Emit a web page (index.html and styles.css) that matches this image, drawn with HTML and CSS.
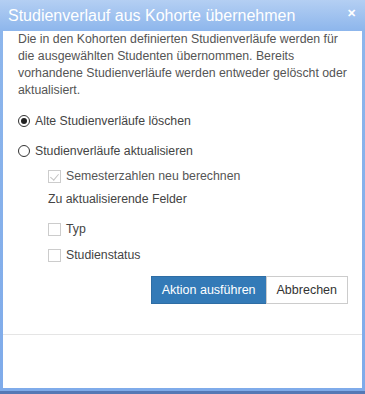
FILE: index.html
```html
<!DOCTYPE html>
<html lang="de">
<head>
    <meta charset="UTF-8">
    <title>Studienverlauf aus Kohorte übernehmen</title>
    <link rel="stylesheet" href="styles.css">
</head>
<body>
    <div class="dialog">
        <div class="titlebar">
            <span class="title">Studienverlauf aus Kohorte übernehmen</span>
            <span class="close">&#x2715;</span>
        </div>

        <div class="content">
            <p class="intro">Die in den Kohorten definierten Studienverläufe werden für die ausgewählten Studenten übernommen. Bereits vorhandene Studienverläufe werden entweder gelöscht oder aktualisiert.</p>

            <div class="options">
                <label class="row row-first">
                    <span class="radio checked"></span>
                    Alte Studienverläufe löschen
                </label>
                <label class="row row-second">
                    <span class="radio"></span>
                    Studienverläufe aktualisieren
                </label>

                <div class="sub">
                    <label class="row row-semester">
                        <span class="check checked disabled"></span>
                        Semesterzahlen neu berechnen
                    </label>
                    <div class="row row-heading">Zu aktualisierende Felder</div>
                    <label class="row row-typ">
                        <span class="check"></span>
                        Typ
                    </label>
                    <label class="row row-status">
                        <span class="check"></span>
                        Studienstatus
                    </label>
                </div>
            </div>

            <div class="buttons">
                <button class="btn btn-primary">Aktion ausführen</button>
                <button class="btn btn-default">Abbrechen</button>
            </div>

            <div class="separator"></div>
        </div>
    </div>
</body>
</html>
```

FILE: styles.css
```css
* {
    box-sizing: border-box;
    margin: 0;
    padding: 0;
}

body {
    font-family: 'Liberation Sans', Arial, sans-serif;
    font-size: 12.3px;
    color: #444;
    background: #fff;
}

.dialog {
    width: 365px;
    height: 394px;
    display: flex;
    flex-direction: column;
    padding: 0 3px 3px 3px;
    background: linear-gradient(to bottom, #b4cff3 0%, #8db6ec 31px, #7fabea 100%);
    border-bottom: 3px solid #5578b5;
}

.titlebar {
    height: 31px;
    display: flex;
    align-items: center;
    justify-content: space-between;
    padding: 0 6px 0 5px;
    color: #fff;
}

.title {
    font-size: 16px;
    line-height: 31px;
}

.close {
    font-size: 11px;
    font-weight: bold;
    align-self: flex-start;
    margin-top: 7px;
}

.content {
    flex: 1;
    background: #fff;
    padding: 0 14px 0 15px;
}

.intro {
    line-height: 17px;
    color: #555;
}

.options {
    margin-top: 12px;
}

.row {
    display: flex;
    align-items: center;
    height: 20px;
    gap: 5px;
}

.row-second {
    margin-top: 10px;
}

.sub {
    padding-left: 30px;
}

.row-semester {
    margin-top: 5px;
    color: #555;
}

.row-heading {
    margin-top: 3px;
}

.row-typ {
    margin-top: 10px;
}

.row-status {
    margin-top: 6px;
}

.radio {
    width: 12px;
    height: 12px;
    border: 1px solid #333;
    border-radius: 50%;
    display: flex;
    align-items: center;
    justify-content: center;
}

.radio.checked::after {
    content: '';
    width: 6px;
    height: 6px;
    border-radius: 50%;
    background: #222;
}

.check {
    width: 13px;
    height: 13px;
    border: 1px solid #ccc;
    position: relative;
}

.check.checked::after {
    content: '';
    position: absolute;
    left: 3px;
    top: 1px;
    width: 4px;
    height: 7px;
    border: solid #c4c4c4;
    border-width: 0 1px 1px 0;
    transform: rotate(40deg);
}

.buttons {
    display: flex;
    justify-content: flex-end;
    margin-top: 11px;
}

.btn {
    height: 28px;
    font-family: inherit;
    font-size: 12.5px;
    padding: 0 10px;
    cursor: pointer;
}

.btn-primary {
    background: #337ab7;
    border: 1px solid #2e6da4;
    color: #fff;
}

.btn-default {
    background: #fff;
    border: 1px solid #ccc;
    color: #333;
    margin-left: -1px;
}

.separator {
    margin: 30px -14px 0 -15px;
    border-top: 1px solid #e5e5e5;
}
```
